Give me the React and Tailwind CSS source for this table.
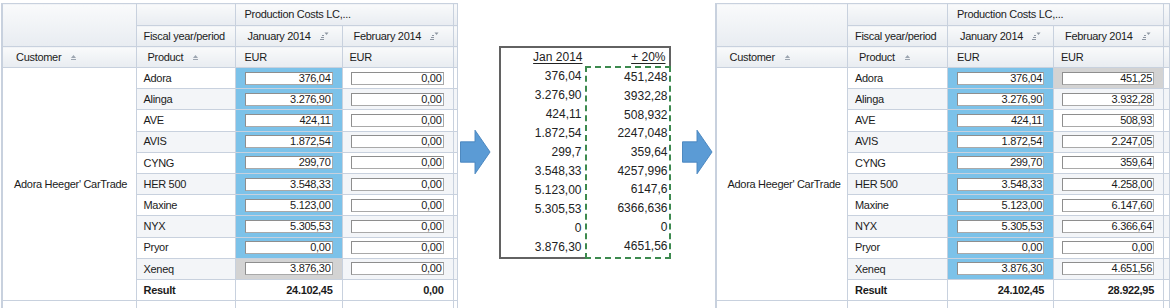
const products = ["Adora", "Alinga", "AVE", "AVIS", "CYNG", "HER 500", "Maxine", "NYX", "Pryor", "Xeneq"];
const janValues = ["376,04", "3.276,90", "424,11", "1.872,54", "299,70", "3.548,33", "5.123,00", "5.305,53", "0,00", "3.876,30"];
const febBefore = products.map(() => "0,00");
const febAfter = ["451,25", "3.932,28", "508,93", "2.247,05", "359,64", "4.258,00", "6.147,60", "6.366,64", "0,00", "4.651,56"];

const calcRows = [
  ["376,04", "451,248"],
  ["3.276,90", "3932,28"],
  ["424,11", "508,932"],
  ["1.872,54", "2247,048"],
  ["299,7", "359,64"],
  ["3.548,33", "4257,996"],
  ["5.123,00", "6147,6"],
  ["5.305,53", "6366,636"],
  ["0", "0"],
  ["3.876,30", "4651,56"]
];

const line = "border border-[#c8d1de]";
const head = `${line} bg-linear-to-b from-[#f9fafb] to-[#e8ecf1] text-left font-normal align-middle`;

function SortUp() {
  return (
    <svg width="7" height="7" viewBox="0 0 7 7" className="inline-block">
      <path d="M3.5 1 L6 4 H1 Z" fill="#9ca5b0" />
      <rect x="1" y="5" width="5" height="1" fill="#9ca5b0" />
    </svg>
  );
}

function SortMenu() {
  return (
    <svg width="9" height="8" viewBox="0 0 9 8" className="inline-block">
      <path d="M0 7.5h4M1 5.5h3M2 3.5h2" stroke="#8d96a2" strokeWidth="1" />
      <path d="M4.5 0.5h4l-2 2.5z" fill="#8d96a2" />
    </svg>
  );
}

function ValueBox({ value, mr = "mr-[9px]", ml = "ml-[9px]" }) {
  return (
    <div className={`${ml} ${mr} h-[13px] border border-[#8e8e8e] border-r-[#a9a9a9] border-b-[#a9a9a9] bg-white text-right pr-[1px] leading-[11px]`}>
      {value}
    </div>
  );
}

function PivotTable({ widths, febValues, febTotal, janBg, febBg }) {
  const total = widths.reduce((a, b) => a + b, 0);
  return (
    <table className="table-fixed border-collapse text-[11px] tracking-[-0.3px] text-[#1b1b1b]" style={{ width: total }}>
      <colgroup>
        {widths.map((w, i) => (
          <col key={i} style={{ width: w }} />
        ))}
      </colgroup>
      <tbody>
        <tr className="h-[22px]">
          <th rowSpan={2} className={`${head} border-l-2`} />
          <th className={head} />
          <th colSpan={2} className={`${head} pl-[9px]`}>Production Costs LC,...</th>
          <th className={head} />
        </tr>
        <tr className="h-[21px]">
          <th className={`${head} pl-[7px]`}>Fiscal year/period</th>
          <th className={`${head} pl-[12px]`}>
            <span className="flex items-center gap-[9px]">January 2014 <SortMenu /></span>
          </th>
          <th className={`${head} pl-[11px]`}>
            <span className="flex items-center gap-[9px]">February 2014 <SortMenu /></span>
          </th>
          <th className={head} />
        </tr>
        <tr className="h-[21px]">
          <th className={`${head} border-l-2 pl-[13px]`}>
            <span className="flex items-center gap-[9px]">Customer <SortUp /></span>
          </th>
          <th className={`${head} pl-[11px]`}>
            <span className="flex items-center gap-[9px]">Product <SortUp /></span>
          </th>
          <th className={`${head} pl-[9px]`}>EUR</th>
          <th className={`${head} pl-[7px]`}>EUR</th>
          <th className={head} />
        </tr>
        {products.map((p, i) => {
          const rowBg = i % 2 === 1 ? "bg-[#f3f5f8]" : "bg-white";
          return (
            <tr key={p} className="h-[21.2px]">
              {i === 0 && (
                <td rowSpan={11} className={`${line} border-l-2 bg-white pl-[11px] align-middle`}>
                  Adora Heeger' CarTrade
                </td>
              )}
              <td className={`${line} ${rowBg} pl-[7px]`}>{p}</td>
              <td className={`${line} ${janBg(i)} p-0`}>
                <ValueBox value={janValues[i]} />
              </td>
              <td className={`${line} ${febBg(i) || rowBg} p-0`}>
                <ValueBox value={febValues[i]} ml="ml-[8px]" />
              </td>
              <td className={`${line} ${rowBg}`} />
            </tr>
          );
        })}
        <tr className="h-[21.2px] font-bold">
          <td className={`${line} bg-white pl-[7px]`}>Result</td>
          <td className={`${line} bg-white pr-[9px] text-right`}>24.102,45</td>
          <td className={`${line} bg-white pr-[9px] text-right`}>{febTotal}</td>
          <td className={`${line} bg-white`} />
        </tr>
        <tr className="h-[12px]">
          <td className={`${line} border-l-2`} />
          <td className={line} />
          <td className={line} />
          <td className={line} />
          <td className={line} />
        </tr>
      </tbody>
    </table>
  );
}

function Arrow({ className }) {
  return (
    <svg width="32" height="46" viewBox="0 0 32 46" className={className}>
      <path d="M0.5 12.5 H15.5 V0.5 L31 23 L15.5 45.5 V33.5 H0.5 Z" fill="#5b9bd5" stroke="#4a86bf" strokeWidth="1" />
    </svg>
  );
}

function CalcBox() {
  return (
    <div className="ml-[8px] mt-[46px] w-[172px] text-[12px] text-[#222]" style={{ fontFamily: '"Liberation Sans", Arial, sans-serif' }}>
      <div className="flex h-[20px] items-center border-x-2 border-t-2 border-[#626262]">
        <div className="w-[82px] text-right underline underline-offset-2">Jan 2014</div>
        <div className="w-[83px] text-right underline underline-offset-2">+ 20%</div>
      </div>
      <div className="flex">
        <div className="w-[86px] border-l-2 border-b-2 border-[#626262] pr-[3px]">
          {calcRows.map((r, i) => (
            <div key={i} className="h-[19.1px] flex items-center justify-end">{r[0]}</div>
          ))}
        </div>
        <div className="w-[86px] border-2 border-dashed border-[#3d8a4f] pr-[1px]">
          {calcRows.map((r, i) => (
            <div key={i} className="h-[18.7px] flex items-center justify-end">{r[1]}</div>
          ))}
        </div>
      </div>
    </div>
  );
}

export default function App() {
  return (
    <div className="flex h-[308px] w-[1170px] items-start overflow-hidden bg-white" style={{ fontFamily: '"Liberation Sans", Arial, sans-serif' }}>
      <div className="ml-[1px] mt-[3px]">
        <PivotTable
          widths={[134, 99, 107, 111, 4]}
          febValues={febBefore}
          febTotal="0,00"
          janBg={(i) => (i === 9 ? "bg-[#d3d3d3]" : "bg-[#7cc2e9]")}
          febBg={() => ""}
        />
      </div>
      <Arrow className="ml-[2px] mt-[129px]" />
      <CalcBox />
      <Arrow className="ml-[11px] mt-[129px]" />
      <div className="ml-[2px] mt-[3px]">
        <PivotTable
          widths={[132, 100, 106, 110, 6]}
          febValues={febAfter}
          febTotal="28.922,95"
          janBg={() => "bg-[#7cc2e9]"}
          febBg={(i) => (i === 0 ? "bg-[#d3d3d3]" : "")}
        />
      </div>
    </div>
  );
}
